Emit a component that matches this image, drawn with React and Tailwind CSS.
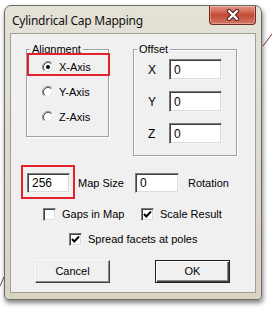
import React from "react";

const sunken =
  "bg-white border border-t-[#7a7a7a] border-l-[#7a7a7a] border-b-[#f4f4f4] border-r-[#f4f4f4] shadow-[inset_1px_1px_0_#404040,inset_-1px_-1px_0_#dcdcdc]";

function Radio({ checked }) {
  return (
    <svg width="12" height="12" viewBox="0 0 12 12" className="shrink-0">
      <circle cx="6" cy="6" r="4.5" fill="white" />
      <path d="M2.11 9.89 A5.5 5.5 0 0 1 9.89 2.11" fill="none" stroke="#8a8a8a" strokeWidth="1" />
      <path d="M9.89 2.11 A5.5 5.5 0 0 1 2.11 9.89" fill="none" stroke="#ffffff" strokeWidth="1" />
      <path d="M2.82 9.18 A4.5 4.5 0 0 1 9.18 2.82" fill="none" stroke="#505050" strokeWidth="1" />
      <path d="M9.18 2.82 A4.5 4.5 0 0 1 2.82 9.18" fill="none" stroke="#dcdcdc" strokeWidth="1" />
      {checked && <circle cx="6" cy="6" r="2" fill="#000" />}
    </svg>
  );
}

function Check({ checked }) {
  return (
    <span className={`w-[13px] h-[13px] shrink-0 flex items-center justify-center ${sunken}`}>
      {checked && (
        <svg width="9" height="9" viewBox="0 0 9 9">
          <polyline points="1,4 3.3,6.5 8,1.5" fill="none" stroke="#000" strokeWidth="1.9" />
        </svg>
      )}
    </span>
  );
}

function Field({ value, w }) {
  return (
    <div className={`${sunken} h-[21px] ${w} flex items-center pl-[4px] text-[12px] text-black`}>
      {value}
    </div>
  );
}

export default function App() {
  return (
    <div className="relative w-[272px] h-[310px] bg-white overflow-hidden pt-[5px] pl-[4px] font-['Liberation_Sans',Arial,sans-serif] text-[11px] text-black">
      <svg className="absolute left-0 top-0" width="272" height="310">
        <line x1="263" y1="46" x2="272" y2="34" stroke="#8a2a2a" strokeWidth="1" />
        <line x1="0" y1="286" x2="4" y2="277" stroke="#555" strokeWidth="1" />
      </svg>
      <div className="relative w-[258px] h-[295px] rounded-t-[7px] rounded-b-[4px] border border-[#6c6a64] bg-gradient-to-b from-[#e4e1d7] to-[#d8d3c3] shadow-[1px_3px_5px_rgba(0,0,0,0.5)] flex flex-col px-[5px] pb-[6px]">
        {/* title bar */}
        <div className="h-[27px] flex items-start justify-between">
          <div className="pl-[2px] pt-[6px] font-['Noto_Sans',Arial,sans-serif] text-[12px] tracking-[-0.25px] text-[#111]">
            Cylindrical Cap Mapping
          </div>
          <div className="w-[47px] h-[19px] rounded-b-[4px] border border-t-0 border-[#6b2a22] bg-gradient-to-b from-[#e49888] via-[#c34a37] to-[#d47764] flex items-center justify-center shadow-[inset_0_0_0_1px_rgba(255,255,255,0.3)]">
            <svg width="14" height="12" viewBox="0 0 14 12">
              <path d="M3 2 L11 10 M11 2 L3 10" stroke="#4a1a14" strokeWidth="4.2" strokeLinecap="round" />
              <path d="M3 2 L11 10 M11 2 L3 10" stroke="#ffffff" strokeWidth="2.4" strokeLinecap="round" />
            </svg>
          </div>
        </div>
        {/* client */}
        <div className="relative h-[260px] w-[246px] bg-[#f0f0f0] border border-[#a29e92] flex flex-col pl-[15px] pt-[15px]">
          <div className="flex items-start">
            {/* Alignment */}
            <div className="relative w-[83px] h-[88px] border border-[#a0a0a0] shadow-[inset_1px_1px_0_white,1px_1px_0_white] flex flex-col pl-[15px] pt-[10px] gap-[11px]">
              <span className="absolute -top-[7px] left-[3px] bg-[#f0f0f0] px-[2px] leading-[13px]">Alignment</span>
              <div className="flex items-center h-[14px] gap-[5px]">
                <Radio checked />
                <span>X-Axis</span>
              </div>
              <div className="flex items-center h-[14px] gap-[5px]">
                <Radio />
                <span>Y-Axis</span>
              </div>
              <div className="flex items-center h-[14px] gap-[5px]">
                <Radio />
                <span>Z-Axis</span>
              </div>
            </div>
            {/* Offset */}
            <div className="relative ml-[24px] w-[104px] h-[107px] border border-[#a0a0a0] shadow-[inset_1px_1px_0_white,1px_1px_0_white] flex flex-col pt-[9px] gap-[11px]">
              <span className="absolute -top-[7px] left-[3px] bg-[#f0f0f0] px-[2px] leading-[13px]">Offset</span>
              {["X", "Y", "Z"].map((l) => (
                <div key={l} className="flex items-center h-[21px]">
                  <span className="w-[35px] pl-[14px] text-[12px]">{l}</span>
                  <Field value="0" w="w-[53px]" />
                </div>
              ))}
            </div>
          </div>
          {/* map size row */}
          <div className="flex items-center mt-[17px] pl-[1px]">
            <div className={`${sunken} h-[20px] w-[43px] flex items-center pl-[4px] text-[12px]`}>256</div>
            <span className="w-[65px] pl-[8px]">Map Size</span>
            <div className={`${sunken} h-[20px] w-[44px] flex items-center pl-[4px] text-[12px]`}>0</div>
            <span className="pl-[9px]">Rotation</span>
          </div>
          {/* checkbox row 1 */}
          <div className="flex items-center mt-[15px] pl-[17px] h-[13px]">
            <div className="flex items-center gap-[6px] w-[98px]">
              <Check />
              <span>Gaps in Map</span>
            </div>
            <div className="flex items-center gap-[6px]">
              <Check checked />
              <span>Scale Result</span>
            </div>
          </div>
          <div className="flex items-center mt-[12px] pl-[43px] h-[13px] gap-[6px]">
            <Check checked />
            <span>Spread facets at poles</span>
          </div>
          {/* buttons */}
          <div className="flex mt-[14px] pl-[9px] gap-[45px]">
            <button className="w-[75px] h-[23px] bg-[#f0f0f0] border border-t-[#fafafa] border-l-[#fafafa] border-b-[#404040] border-r-[#404040] shadow-[inset_-1px_-1px_0_#8a8a8a,inset_1px_1px_0_#e6e6e6] text-[11px] text-black">
              Cancel
            </button>
            <button className="w-[75px] h-[23px] bg-[#f0f0f0] border border-[#202020] shadow-[inset_1px_1px_0_#ffffff,inset_-1px_-1px_0_#404040,inset_-2px_-2px_0_#8a8a8a] text-[11px] text-black">
              OK
            </button>
          </div>
          {/* red annotations */}
          <div className="absolute left-[16px] top-[19px] w-[83px] h-[23px] border-2 border-[#e3222e]" />
          <div className="absolute left-[10px] top-[131px] w-[54px] h-[34px] border-2 border-[#e3222e]" />
        </div>
      </div>
    </div>
  );
}
